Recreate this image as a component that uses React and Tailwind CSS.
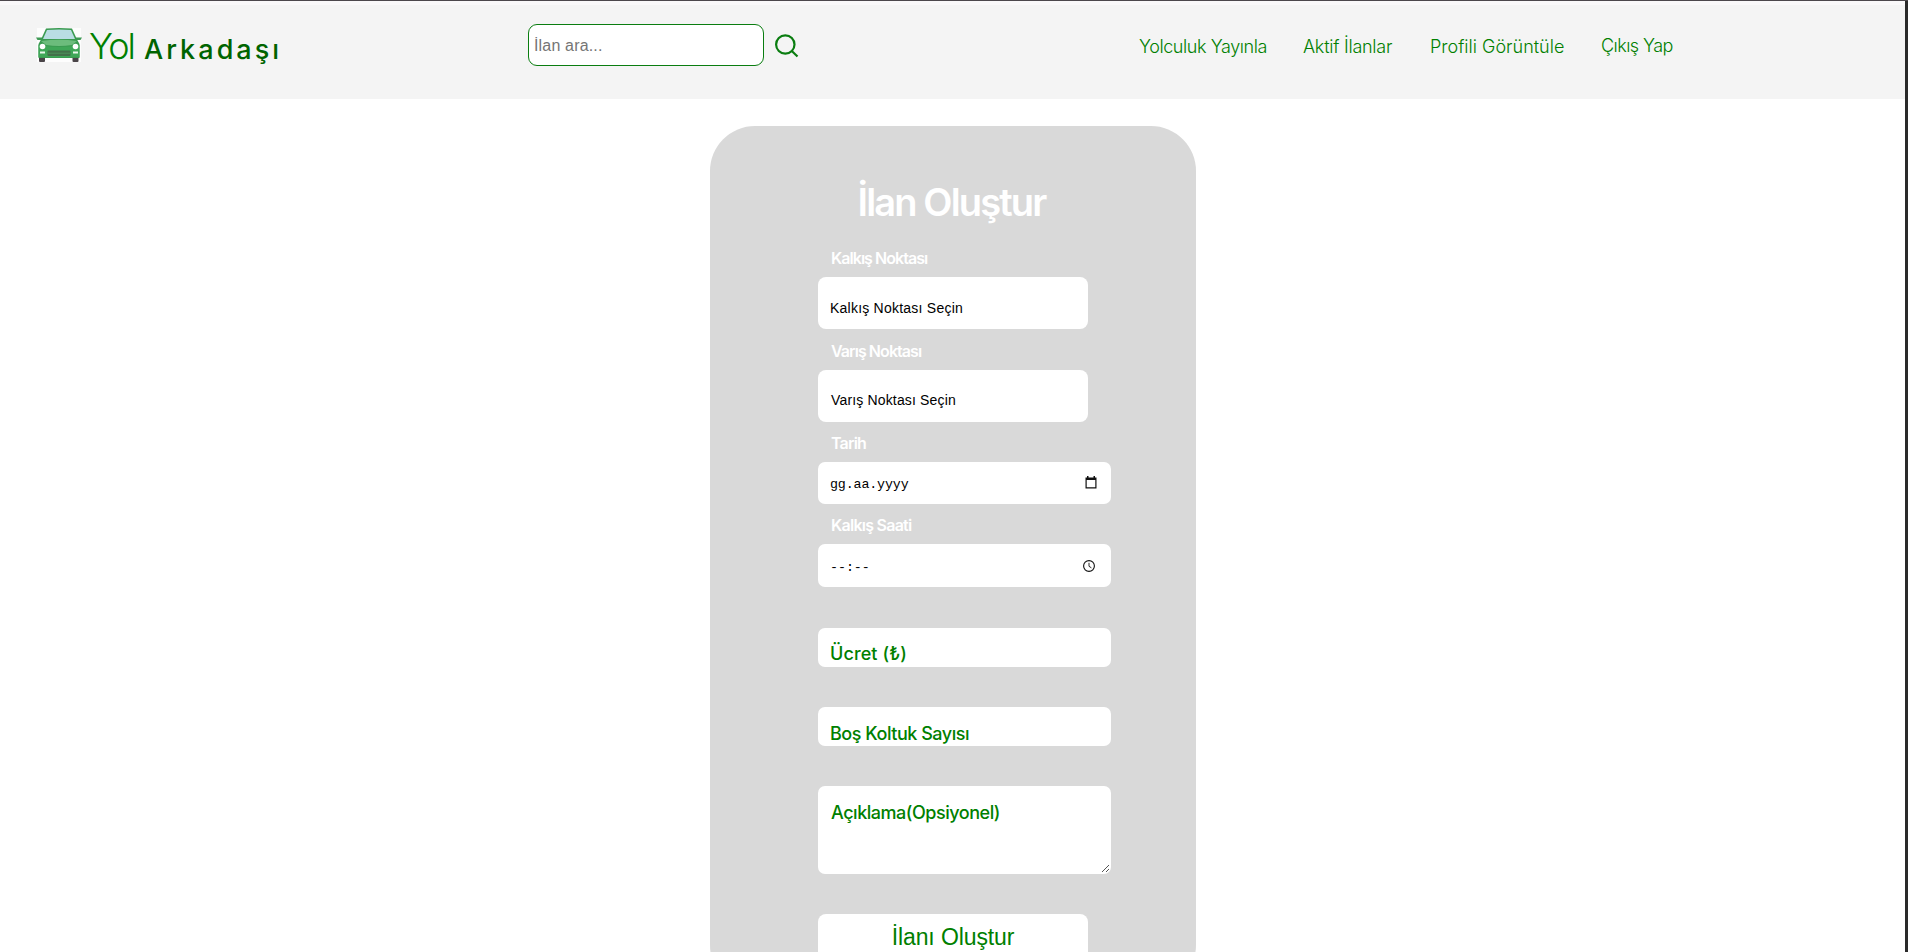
import React from "react";

function CarIcon() {
  return (
    <svg className="mt-[26px] ml-[36px] h-[36px] w-[46px] shrink-0" viewBox="0 0 46 36">
      <rect x="1" y="1" width="44" height="34" fill="#fdfdfd" />
      <rect x="3" y="29" width="6" height="6" rx="1" fill="#4a4448" />
      <rect x="36.500" y="29" width="6" height="6" rx="1" fill="#4a4448" />
      <path d="M0 10.5h6v2.500H1.500zM46 10.500h-6v2.500h4.500z" fill="#3f9a55" />
      <path d="M10 1.500Q23 .4 36 1.500L41 12.500 43.500 17V31H2.500V17L5 12.500z" fill="#3a9a50" />
      <path d="M11 3Q23 2 35 3L39 12H7z" fill="#b9dde3" />
      <path d="M5 14Q23 11.500 41 14L36 18Q23 20 10 18z" fill="#6cbc7c" />
      <path d="M2.500 18Q23 22 43.500 18V30H2.500z" fill="#3fa657" />
      <circle cx="6.500" cy="19.500" r="2.800" fill="#fff" />
      <circle cx="39.500" cy="19.500" r="2.800" fill="#fff" />
      <rect x="4" y="24.500" width="5" height="2" fill="#e8f6ea" />
      <rect x="37" y="24.500" width="5" height="2" fill="#e8f6ea" />
      <rect x="11.500" y="23.500" width="23" height="5.500" rx="1" fill="#43704a" />
      <path d="M12 26.200h22" stroke="#4f9a60" strokeWidth=".8" />
    </svg>
  );
}

function SearchIcon() {
  return (
    <svg className="mt-[32px] ml-[10px] h-[26px] w-[26px]" viewBox="0 0 26 26" fill="none" stroke="#0a7d10" strokeWidth="2.2">
      <circle cx="11.300" cy="11.500" r="9.200" />
      <path d="M17.800 18l5.700 5.500" />
    </svg>
  );
}

function CalendarIcon() {
  return (
    <svg className="mt-[14px] mr-[14px] h-[13px] w-[12px]" viewBox="0 0 12 13">
      <path d="M2 0h1.500v1.500h5V0H10v1.500h1.500v11H.500v-11H2zM1.700 4v7.300h8.600V4z" fill="#111" fillRule="evenodd" />
    </svg>
  );
}

function ClockIcon() {
  return (
    <svg className="mt-[16px] mr-[16px] h-[12px] w-[12px]" viewBox="0 0 12 12" fill="none" stroke="#111">
      <circle cx="6" cy="6" r="5.400" strokeWidth="1.100" />
      <path d="M6 2.800V6.300l2.400 1.500" strokeWidth=".9" />
    </svg>
  );
}

function Label({ className, children }) {
  return <label className={`block pl-[13px] text-[16px] leading-[20px] font-semibold whitespace-nowrap text-white ${className}`}>{children}</label>;
}

export default function App() {
  return (
    <div className="flex h-[952px] w-[1908px] flex-col overflow-hidden border-t border-[#4b474b] bg-white font-['Inter',sans-serif]">
      <div className="flex min-h-0 flex-1">
        <div className="min-w-0 flex-1">
          <header className="flex h-[98px] items-start border-t-4 border-[#f9f8f9] bg-[#f4f4f4] text-[#008000]">
            <div className="-mt-[4px] flex w-[528px] items-start">
              <CarIcon />
              <span className="mt-[25px] ml-[7px] w-[55px] text-[36px] leading-[40px] font-light tracking-[-2px]">Yol</span>
              <span className="mt-[29px] text-[27px] leading-[40px] font-medium tracking-[3.05px] text-[#006400]">Arkadaşı</span>
            </div>
            <div className="-mt-[4px] flex w-[611px] items-start">
              <div className="mt-[23px] h-[42px] w-[236px] rounded-[9px] border border-[#0a7d10] bg-white pt-[11px] pl-[5px] font-['Liberation_Sans',sans-serif] text-[16px] leading-[20px] tracking-[0.17px] text-[#757575]">
                İlan ara...
              </div>
              <SearchIcon />
            </div>
            <nav className="-mt-[4px] flex pt-[34px] text-[18px] leading-[24px] font-light whitespace-nowrap">
              <a className="w-[164px] tracking-[-0.42px]">Yolculuk Yayınla</a>
              <a className="w-[127px] tracking-[-0.25px]">Aktif İlanlar</a>
              <a className="w-[171px] tracking-[0px]">Profili Görüntüle</a>
              <a className="-mt-px tracking-[-0.55px]">Çıkış Yap</a>
            </nav>
          </header>

          <main className="ml-[710px] mt-[27px] h-[864px] w-[486px] rounded-[45px] bg-[#d9d9d9] px-[108px] pt-[52px]">
            <h1 className="pr-[3px] text-center text-[38px] leading-[48px] font-semibold tracking-[-1.85px] whitespace-nowrap text-white">İlan Oluştur</h1>

            <Label className="mt-[22px] tracking-[-0.96px]">Kalkış Noktası</Label>
            <div className="mt-[9px] h-[52px] w-[270px] rounded-[8px] bg-white pt-[21px] pl-[12px] font-['Liberation_Sans',sans-serif] text-[14px] leading-[20px] tracking-[0.23px] text-black">
              Kalkış Noktası Seçin
            </div>

            <Label className="mt-[12px] tracking-[-0.93px]">Varış Noktası</Label>
            <div className="mt-[9px] h-[52px] w-[270px] rounded-[8px] bg-white pt-[20px] pl-[13px] font-['Liberation_Sans',sans-serif] text-[14px] leading-[20px] tracking-[0.16px] text-black">
              Varış Noktası Seçin
            </div>

            <Label className="mt-[11px] tracking-[-0.82px]">Tarih</Label>
            <div className="mt-[9px] flex h-[42px] w-[293px] items-start justify-between rounded-[7px] bg-white pl-[12px]">
              <span className="mt-[13px] font-['Liberation_Mono',monospace] text-[13.333px] leading-[20px] tracking-[-0.15px] text-black">gg.aa.yyyy</span>
              <CalendarIcon />
            </div>

            <Label className="mt-[11px] tracking-[-0.74px]">Kalkış Saati</Label>
            <div className="mt-[9px] flex h-[43px] w-[293px] items-start justify-between rounded-[7px] bg-white pl-[12px]">
              <span className="mt-[14px] font-['Liberation_Mono',monospace] text-[13.333px] leading-[20px] tracking-[-0.05px] text-black">--:--</span>
              <ClockIcon />
            </div>

            <div className="mt-[41px] h-[39px] w-[293px] rounded-[7px] bg-white pt-[14px] pl-[12px] text-[18px] leading-[24px] font-medium tracking-[0.1px] text-[#008000]">Ücret (₺)</div>
            <div className="mt-[40px] h-[39px] w-[293px] rounded-[7px] bg-white pt-[15px] pl-[12px] text-[18px] leading-[24px] font-medium tracking-[-0.47px] text-[#008000]">Boş Koltuk Sayısı</div>
            <div className="mt-[40px] flex h-[88px] w-[293px] items-end justify-between rounded-[7px] bg-white pr-[2px] pb-[2px] pl-[13px]">
              <span className="self-start pt-[15px] text-[18px] leading-[24px] font-medium tracking-[-0.47px] text-[#008000]">Açıklama(Opsiyonel)</span>
              <svg className="h-[7px] w-[7px]" viewBox="0 0 7 7" stroke="#555" fill="none">
                <path d="M0 7L7 0M4 7L7 4" />
              </svg>
            </div>

            <button className="mt-[40px] block h-[52px] w-[270px] rounded-[8px] bg-white pt-[9px] pb-[15px] font-['Liberation_Sans',sans-serif] text-[23px] leading-[28px] tracking-[-0.1px] text-[#008000]">İlanı Oluştur</button>
          </main>
        </div>
        <div className="w-[3px] shrink-0 bg-[#2a2a2a]" />
      </div>
    </div>
  );
}
